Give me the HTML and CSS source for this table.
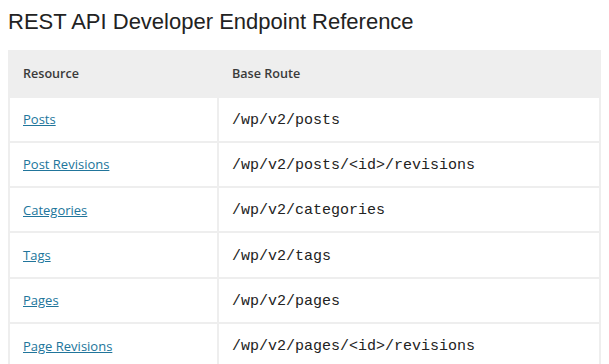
FILE: index.html
```html
<!DOCTYPE html>
<html>
<head>
<meta charset="utf-8">
<link rel="stylesheet" href="styles.css">
</head>
<body>
<h1 class="title">REST API Developer Endpoint Reference</h1>
<table class="ref">
  <thead>
    <tr><th class="col-res">Resource</th><th>Base Route</th></tr>
  </thead>
  <tbody>
    <tr><td><a href="#">Posts</a></td><td><code>/wp/v2/posts</code></td></tr>
    <tr><td><a href="#">Post Revisions</a></td><td><code>/wp/v2/posts/&lt;id&gt;/revisions</code></td></tr>
    <tr><td><a href="#">Categories</a></td><td><code>/wp/v2/categories</code></td></tr>
    <tr><td><a href="#">Tags</a></td><td><code>/wp/v2/tags</code></td></tr>
    <tr><td><a href="#">Pages</a></td><td><code>/wp/v2/pages</code></td></tr>
    <tr><td><a href="#">Page Revisions</a></td><td><code>/wp/v2/pages/&lt;id&gt;/revisions</code></td></tr>
  </tbody>
</table>
</body>
</html>
```
FILE: styles.css
```css
html, body {
  background: #fff;
}
body {
  margin: 8px;
  font-family: "Open Sans", "Liberation Sans", sans-serif;
  color: #333;
}
.title {
  font-family: "Liberation Sans", Arial, sans-serif;
  font-weight: normal;
  font-size: 22px;
  line-height: 28px;
  margin: 0 0 14px;
  color: #222;
}
.ref {
  width: 100%;
  border-collapse: collapse;
  border: 2px solid #eee;
}
.ref th,
.ref td {
  border: 2px solid #eee;
  text-align: left;
  padding: 0 13px;
  height: 43.3px;
  font-size: 13px;
  vertical-align: middle;
}
.ref th {
  background: #eee;
  font-weight: 600;
  font-size: 12.6px;
  color: #3a3a3a;
  height: 43.5px;
}
.ref .col-res {
  width: 181px;
}
.ref a {
  color: #21759b;
  text-decoration: underline;
}
.ref code {
  font-family: "Liberation Mono", "DejaVu Sans Mono", monospace;
  font-size: 15px;
  color: #222;
}
```
